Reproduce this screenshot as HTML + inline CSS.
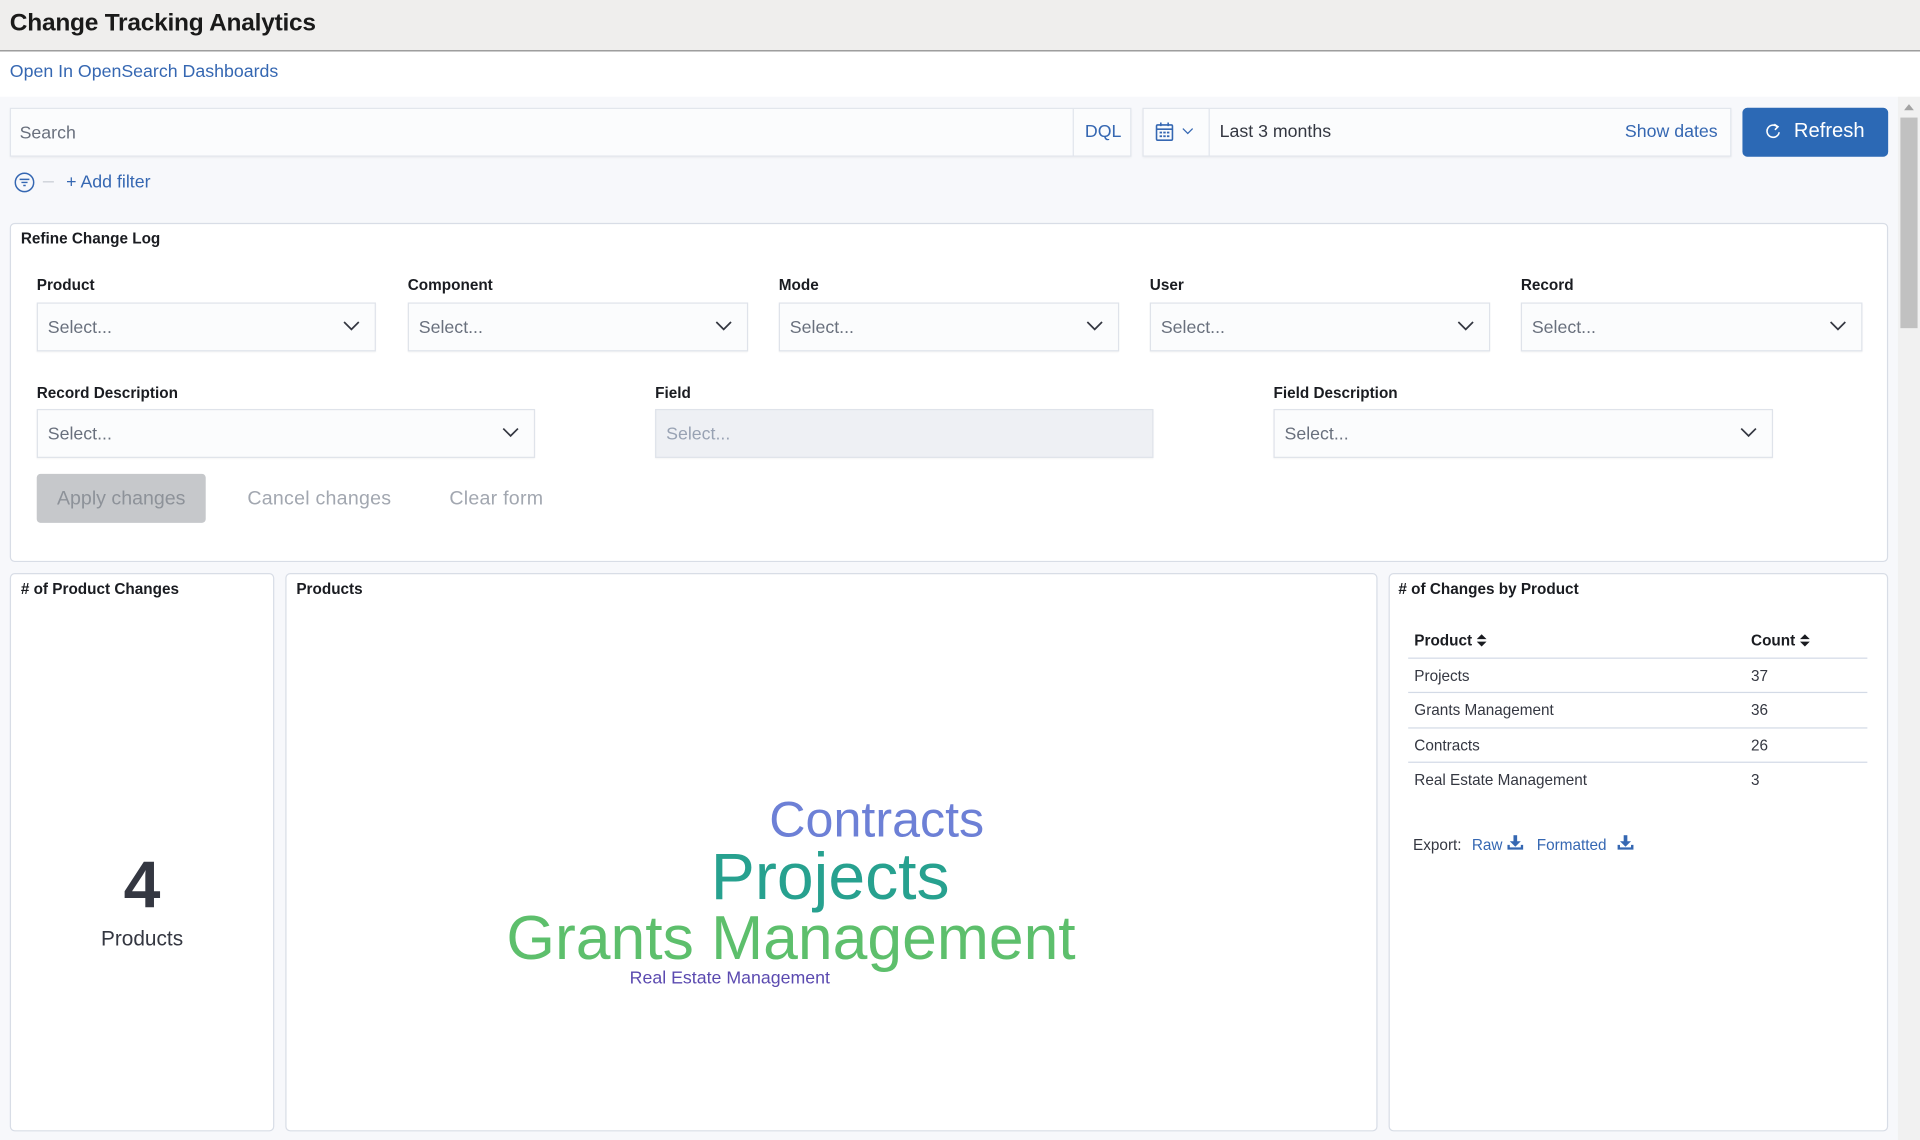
<!DOCTYPE html>
<html><head><meta charset="utf-8"><style>
*{box-sizing:border-box;margin:0;padding:0}
html,body{width:1920px;height:1140px;overflow:hidden;background:#fff;font-family:"Liberation Sans",sans-serif}
#w{position:absolute;left:0;top:0;width:1568px;height:931px;transform:scale(1.22449);transform-origin:0 0;background:#fff}
.a{position:absolute}
.hdr{left:0;top:0;width:1568px;height:42px;background:#efeeed;border-bottom:1px solid #8a8a8a}
.gray{left:0;top:79px;width:1550px;height:852px;background:#f7f8fb}
.box{background:#fbfcfd;border:1px solid #e1e5ec;box-shadow:0 1px 2px rgba(0,0,0,.06)}
.panel{background:#fff;border:1px solid #d8dde6;border-radius:4px}
.lbl{font-size:12.5px;font-weight:bold;color:#1a1c21}
.sel{background:#fbfcfd;border:1px solid #dfe3ea;height:40px;font-size:14.5px;color:#69707d;padding:12px 8px 0;box-shadow:0 1px 1px rgba(0,0,0,.04)}
.sel svg{position:absolute;right:12px;top:14px}
.ttl{font-size:12.5px;font-weight:bold;color:#1a1c21}
.td{font-size:12.5px;color:#343741}
.ln{height:1px;background:#d3dae6;left:1150px;width:375px}
</style></head><body><div id="w">
<div class="a hdr"></div>
<div class="a" style="left:8px;top:8px;font-size:20px;font-weight:bold;color:#1a1a1a;letter-spacing:-0.2px">Change Tracking Analytics</div>
<div class="a" style="left:8px;top:51px;font-size:14.5px;color:#3567b2">Open In OpenSearch Dashboards</div>
<div class="a gray"></div>
<div class="a box" style="left:8px;top:88px;width:916px;height:40px"></div>
<div class="a" style="left:16px;top:101px;font-size:14.5px;color:#69707d">Search</div>
<div class="a" style="left:876px;top:89px;width:1px;height:38px;background:#e1e5ec"></div>
<div class="a" style="left:886px;top:100px;font-size:14.5px;color:#3567b2">DQL</div>
<div class="a box" style="left:933px;top:88px;width:481px;height:40px"></div>
<div class="a" style="left:987px;top:89px;width:1px;height:38px;background:#e1e5ec"></div>
<svg class="a" style="left:943px;top:99px" width="16" height="17" viewBox="0 0 16 17"><rect x="1.5" y="3" width="13" height="12.5" rx="1" fill="none" stroke="#3567b2" stroke-width="1.3"/><line x1="1.5" y1="6.5" x2="14.5" y2="6.5" stroke="#3567b2" stroke-width="1.3"/><line x1="5" y1="1" x2="5" y2="4" stroke="#3567b2" stroke-width="1.3"/><line x1="11" y1="1" x2="11" y2="4" stroke="#3567b2" stroke-width="1.3"/><g fill="#3567b2"><rect x="4" y="8.5" width="2" height="1.5"/><rect x="7" y="8.5" width="2" height="1.5"/><rect x="10" y="8.5" width="2" height="1.5"/><rect x="4" y="11.5" width="2" height="1.5"/><rect x="7" y="11.5" width="2" height="1.5"/><rect x="10" y="11.5" width="2" height="1.5"/></g></svg>
<svg class="a" style="left:965px;top:104px" width="10" height="6"><path d="M1 1l4 4 4-4" fill="none" stroke="#3567b2" stroke-width="1"/></svg>
<div class="a" style="left:996px;top:100px;font-size:14.5px;color:#343741">Last 3 months</div>
<div class="a" style="left:1327px;top:100px;font-size:14.5px;color:#3567b2">Show dates</div>
<div class="a" style="left:1423px;top:88px;width:119px;height:40px;background:#2c69b5;border-radius:4px"></div>
<svg class="a" style="left:1441px;top:100px" width="14" height="15" viewBox="0 0 14 15"><path d="M10.5 3.5A5 5 0 1 0 12 8" fill="none" stroke="#fff" stroke-width="1.3"/><path d="M8 1.5l3 2-2.5 2.5" fill="none" stroke="#fff" stroke-width="1.3"/></svg>
<div class="a" style="left:1465px;top:98px;font-size:16.5px;color:#fff">Refresh</div>
<svg class="a" style="left:11px;top:140px" width="18" height="18" viewBox="0 0 18 18"><circle cx="9" cy="9" r="7.5" fill="none" stroke="#3567b2" stroke-width="1.2"/><path d="M5 6.5h8M6.5 9h5M8 11.5h2" stroke="#3567b2" stroke-width="1.2"/></svg>
<div class="a" style="left:35px;top:148px;width:9px;height:1px;background:#c8ccd4"></div>
<div class="a" style="left:54px;top:141px;font-size:14.5px;color:#3567b2">+ Add filter</div>

<div class="a panel" style="left:8px;top:182px;width:1534px;height:277px"></div>
<div class="a ttl" style="left:17px;top:188px">Refine Change Log</div>
<div class="a lbl" style="left:30px;top:226px">Product</div>
<div class="a lbl" style="left:333px;top:226px">Component</div>
<div class="a lbl" style="left:636px;top:226px">Mode</div>
<div class="a lbl" style="left:939px;top:226px">User</div>
<div class="a lbl" style="left:1242px;top:226px">Record</div>
<div class="a sel" style="left:30px;top:247px;width:277px">Select...<svg width="14" height="9"><path d="M1 1l6 6 6-6" fill="none" stroke="#343741" stroke-width="1.4"/></svg></div>
<div class="a sel" style="left:333px;top:247px;width:278px">Select...<svg width="14" height="9"><path d="M1 1l6 6 6-6" fill="none" stroke="#343741" stroke-width="1.4"/></svg></div>
<div class="a sel" style="left:636px;top:247px;width:278px">Select...<svg width="14" height="9"><path d="M1 1l6 6 6-6" fill="none" stroke="#343741" stroke-width="1.4"/></svg></div>
<div class="a sel" style="left:939px;top:247px;width:278px">Select...<svg width="14" height="9"><path d="M1 1l6 6 6-6" fill="none" stroke="#343741" stroke-width="1.4"/></svg></div>
<div class="a sel" style="left:1242px;top:247px;width:279px">Select...<svg width="14" height="9"><path d="M1 1l6 6 6-6" fill="none" stroke="#343741" stroke-width="1.4"/></svg></div>
<div class="a lbl" style="left:30px;top:314px">Record Description</div>
<div class="a lbl" style="left:535px;top:314px">Field</div>
<div class="a lbl" style="left:1040px;top:314px">Field Description</div>
<div class="a sel" style="left:30px;top:334px;width:407px">Select...<svg width="14" height="9"><path d="M1 1l6 6 6-6" fill="none" stroke="#343741" stroke-width="1.4"/></svg></div>
<div class="a sel" style="left:535px;top:334px;width:407px;background:#eef0f4;color:#98a2b3">Select...</div>
<div class="a sel" style="left:1040px;top:334px;width:408px">Select...<svg width="14" height="9"><path d="M1 1l6 6 6-6" fill="none" stroke="#343741" stroke-width="1.4"/></svg></div>
<div class="a" style="left:30px;top:387px;width:138px;height:40px;background:#c6c8cb;border-radius:3px;color:#8d9299;font-size:16px;text-align:center;line-height:41px">Apply changes</div>
<div class="a" style="left:202px;top:399px;font-size:16px;color:#a2a7b0;letter-spacing:0.2px">Cancel changes</div>
<div class="a" style="left:367px;top:399px;font-size:16px;color:#a2a7b0;letter-spacing:0.2px">Clear form</div>

<div class="a panel" style="left:8px;top:468px;width:216px;height:456px"></div>
<div class="a panel" style="left:233px;top:468px;width:892px;height:456px"></div>
<div class="a panel" style="left:1134px;top:468px;width:408px;height:456px"></div>
<div class="a ttl" style="left:17px;top:474px"># of Product Changes</div>
<div class="a ttl" style="left:242px;top:474px">Products</div>
<div class="a ttl" style="left:1142px;top:474px"># of Changes by Product</div>
<div class="a" style="left:8px;top:691px;width:216px;text-align:center;font-size:54px;font-weight:bold;color:#343741;line-height:64px">4</div>
<div class="a" style="left:8px;top:757px;width:216px;text-align:center;font-size:17px;color:#343741">Products</div>

<div class="a" style="left:416px;top:644px;width:600px;text-align:center;font-size:41px;color:#6d80d6;line-height:50px">Contracts</div>
<div class="a" style="left:378px;top:684px;width:600px;text-align:center;font-size:54px;color:#27a18f;line-height:64px">Projects</div>
<div class="a" style="left:346px;top:735px;width:600px;text-align:center;font-size:51px;color:#5dbf6c;line-height:62px">Grants Management</div>
<div class="a" style="left:396px;top:791px;width:400px;text-align:center;font-size:14.5px;color:#5b4ab0">Real Estate Management</div>

<div class="a ttl" style="left:1155px;top:516px">Product <svg width="8" height="10" style="vertical-align:-1px"><path d="M0 4L4 0 8 4zM0 6h8L4 10z" fill="#1a1c21"/></svg></div>
<div class="a ttl" style="left:1430px;top:516px">Count <svg width="8" height="10" style="vertical-align:-1px"><path d="M0 4L4 0 8 4zM0 6h8L4 10z" fill="#1a1c21"/></svg></div>
<div class="a ln" style="top:537px"></div>
<div class="a ln" style="top:565px"></div>
<div class="a ln" style="top:594px"></div>
<div class="a ln" style="top:622px"></div>
<div class="a td" style="left:1155px;top:545px">Projects</div><div class="a td" style="left:1430px;top:545px">37</div>
<div class="a td" style="left:1155px;top:573px">Grants Management</div><div class="a td" style="left:1430px;top:573px">36</div>
<div class="a td" style="left:1155px;top:602px">Contracts</div><div class="a td" style="left:1430px;top:602px">26</div>
<div class="a td" style="left:1155px;top:630px">Real Estate Management</div><div class="a td" style="left:1430px;top:630px">3</div>
<div class="a td" style="left:1154px;top:683px">Export:</div>
<div class="a td" style="left:1202px;top:683px;color:#3567b2">Raw</div>
<div class="a td" style="left:1255px;top:683px;color:#3567b2">Formatted</div>
<svg class="a" style="left:1231px;top:682px" width="13" height="12" viewBox="0 0 13 12"><path d="M5 0h3v5h3L6.5 9.5 2 5h3z" fill="#3567b2"/><path d="M0 8h2v2h9V8h2v4H0z" fill="#3567b2"/></svg>
<svg class="a" style="left:1321px;top:682px" width="13" height="12" viewBox="0 0 13 12"><path d="M5 0h3v5h3L6.5 9.5 2 5h3z" fill="#3567b2"/><path d="M0 8h2v2h9V8h2v4H0z" fill="#3567b2"/></svg>

<div class="a" style="left:1550px;top:79px;width:18px;height:852px;background:#f1f1f1"></div>
<div class="a" style="left:1552px;top:96px;width:14px;height:172px;background:#c1c1c1"></div>
<svg class="a" style="left:1555px;top:85px" width="8" height="6"><path d="M0 5L4 0 8 5z" fill="#a3a3a3"/></svg>
</div></body></html>
